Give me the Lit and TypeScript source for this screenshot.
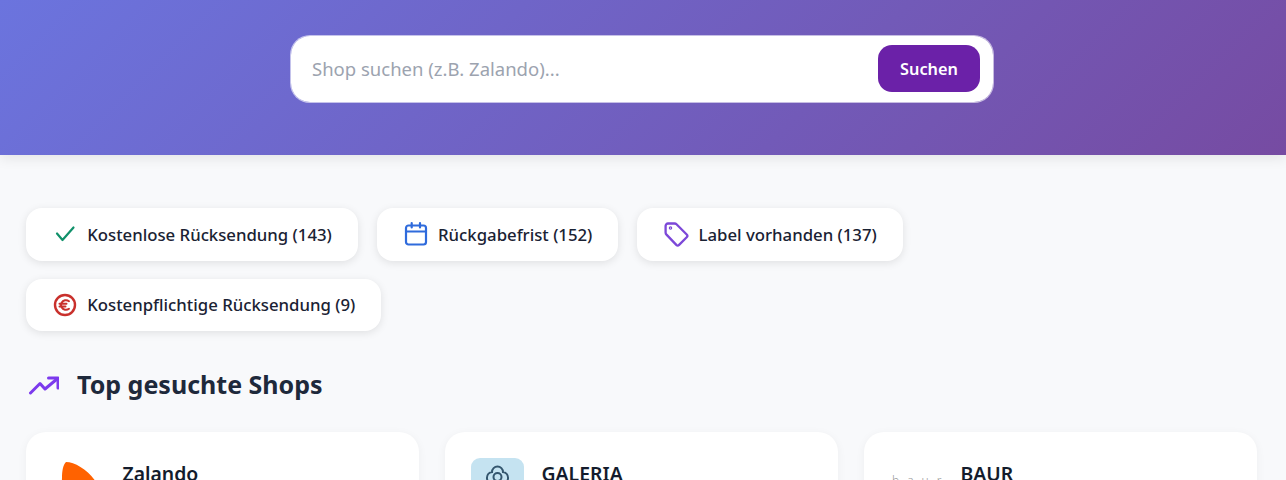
import { LitElement, html, css, svg } from 'lit';
import { customElement } from 'lit/decorators.js';

const chips = [
  {
    label: 'Kostenlose Rücksendung (143)',
    icon: svg`<path d="M5 12.5 10.5 19 21.5 6.5" stroke="#10916a" stroke-width="2.2" />`,
  },
  {
    label: 'Rückgabefrist (152)',
    icon: svg`<g stroke="#2f6bdc" stroke-width="2.2">
      <rect x="3" y="4.5" width="20" height="19" rx="2.5" />
      <path d="M3 10.5h20M8.7 2v4.5M17 2v4.5" />
    </g>`,
  },
  {
    label: 'Label vorhanden (137)',
    icon: svg`<g stroke="#7c48d8" stroke-width="2.3">
      <path d="M5 2.5h6.5c.8 0 1.5.3 2 .8l10.2 10.2c.8.8.8 2 0 2.8l-7.6 7.6c-.8.8-2 .8-2.8 0L3.5 13.6c-.6-.6-.9-1.4-.9-2.2V5c0-1.4 1-2.5 2.4-2.5Z" />
      <circle cx="7.5" cy="7" r=".6" />
    </g>`,
  },
  {
    label: 'Kostenpflichtige Rücksendung (9)',
    icon: svg`<g stroke="#c9302c">
      <circle cx="13" cy="13" r="10" stroke-width="2.4" />
      <path d="M17 9.2a5 5 0 0 0-7.4 1.6 5 5 0 0 0 0 4.4 5 5 0 0 0 7.4 1.6M7.5 11.8h7M7.5 14.4h6" stroke-width="2" />
    </g>`,
  },
];

@customElement('app-root')
export class AppRoot extends LitElement {
  static styles = css`
    :host {
      display: block;
      height: 480px;
      overflow: hidden;
      background: #f8f9fb;
      font-family: 'Noto Sans', 'Open Sans', sans-serif;
      color: #1a2233;
    }

    .hero {
      height: 155px;
      box-sizing: border-box;
      padding: 35px 2px 0 0;
      display: flex;
      justify-content: center;
      background: linear-gradient(135deg, #6b74de 0%, #764ba2 100%);
      box-shadow: 0 4px 12px rgba(0, 0, 0, 0.08);
    }

    .search {
      width: 704px;
      height: 68px;
      box-sizing: border-box;
      display: flex;
      align-items: center;
      padding: 0 13px 1px 21px;
      background: #fff;
      border: 1px solid rgba(255, 255, 255, 0.6);
      background-clip: padding-box;
      border-radius: 20px;
    }

    .search input {
      flex: 1;
      min-width: 0;
      border: none;
      outline: none;
      padding: 0;
      background: transparent;
      font: inherit;
      font-size: 18.5px;
    }

    .search input::placeholder {
      color: #9ca3af;
      opacity: 1;
    }

    .search button {
      width: 102px;
      height: 47px;
      border: none;
      border-radius: 14px;
      background: #6b21a8;
      color: #fff;
      font: inherit;
      font-size: 16.3px;
      font-weight: 600;
    }

    main {
      padding: 53px 29px 0 26px;
    }

    .chips {
      display: flex;
      flex-wrap: wrap;
      gap: 18px 19px;
    }

    .chip {
      display: flex;
      align-items: center;
      gap: 9.2px;
      height: 52.5px;
      box-sizing: border-box;
      padding: 0 26px;
      background: #fff;
      border-radius: 16px;
      box-shadow: 0 2px 8px rgba(0, 0, 0, 0.1);
      font-size: 16.75px;
      font-weight: 500;
    }

    .chip svg {
      width: 26px;
      height: 26px;
      flex: none;
      fill: none;
      stroke-linecap: round;
      stroke-linejoin: round;
    }

    h2 {
      display: flex;
      align-items: center;
      gap: 18px;
      margin: 35.4px 0 29.4px;
      font-size: 25px;
      line-height: 36px;
      font-weight: 700;
      color: #1e293b;
    }

    h2 svg {
      width: 33px;
      height: 26px;
      flex: none;
      fill: none;
      stroke: #7c3aed;
      stroke-width: 3;
      stroke-linecap: round;
      stroke-linejoin: round;
    }

    .shops {
      display: grid;
      grid-template-columns: repeat(3, 393px);
      gap: 26px;
    }

    .shop {
      display: flex;
      gap: 17.5px;
      height: 160px;
      box-sizing: border-box;
      padding: 26px;
      background: #fff;
      border-radius: 20px;
      box-shadow: 0 2px 10px rgba(0, 0, 0, 0.05);
    }

    .logo {
      width: 53px;
      height: 53px;
      flex: none;
      overflow: hidden;
      border-radius: 9px;
    }

    .logo svg {
      display: block;
      width: 53px;
      height: 53px;
    }

    .logo.galeria {
      background: #c5e3f1;
    }

    .logo.baur {
      box-sizing: border-box;
      padding: 15px 0 0 2px;
      font-size: 12px;
      line-height: 16px;
      font-weight: 300;
      letter-spacing: 8px;
      white-space: nowrap;
      color: #999;
    }

    .name {
      font-size: 19.4px;
      font-weight: 600;
      line-height: 32px;
      color: #141c2c;
    }
  `;

  render() {
    return html`
      <div class="hero">
        <form class="search">
          <input type="text" placeholder="Shop suchen (z.B. Zalando)..." />
          <button type="button">Suchen</button>
        </form>
      </div>
      <main>
        <div class="chips">
          ${chips.map(
            (c) => html`<div class="chip">
              <svg viewBox="0 0 26 26">${c.icon}</svg>
              <span>${c.label}</span>
            </div>`
          )}
        </div>
        <h2>
          <svg viewBox="0 0 33 26">
            <path d="M4.5 22 14 12.5l5 5.5L31 8" />
            <path d="M22.5 7H32v10" />
          </svg>
          Top gesuchte Shops
        </h2>
        <div class="shops">
          <div class="shop">
            <div class="logo">
              <svg viewBox="0 0 53 53">
                <path d="M14 4C23 4 36 12 44 24 46 30 34 48 26 50 18 48 9 30 10 20 10 13 11 7 14 4Z" fill="#ff6200" />
              </svg>
            </div>
            <div class="name">Zalando</div>
          </div>
          <div class="shop">
            <div class="logo galeria">
              <svg viewBox="0 0 53 53" fill="none" stroke="#34566e" stroke-width="2">
                <path d="M21 14a5.5 5.5 0 0 1 11 0 5.8 5.8 0 0 1 0 11.5 5.5 5.5 0 0 1-11 0 5.8 5.8 0 0 1 0-11.5Z" />
                <circle cx="26.5" cy="19" r="4" />
              </svg>
            </div>
            <div class="name">GALERIA</div>
          </div>
          <div class="shop">
            <div class="logo baur">baur</div>
            <div class="name">BAUR</div>
          </div>
        </div>
      </main>
    `;
  }
}
